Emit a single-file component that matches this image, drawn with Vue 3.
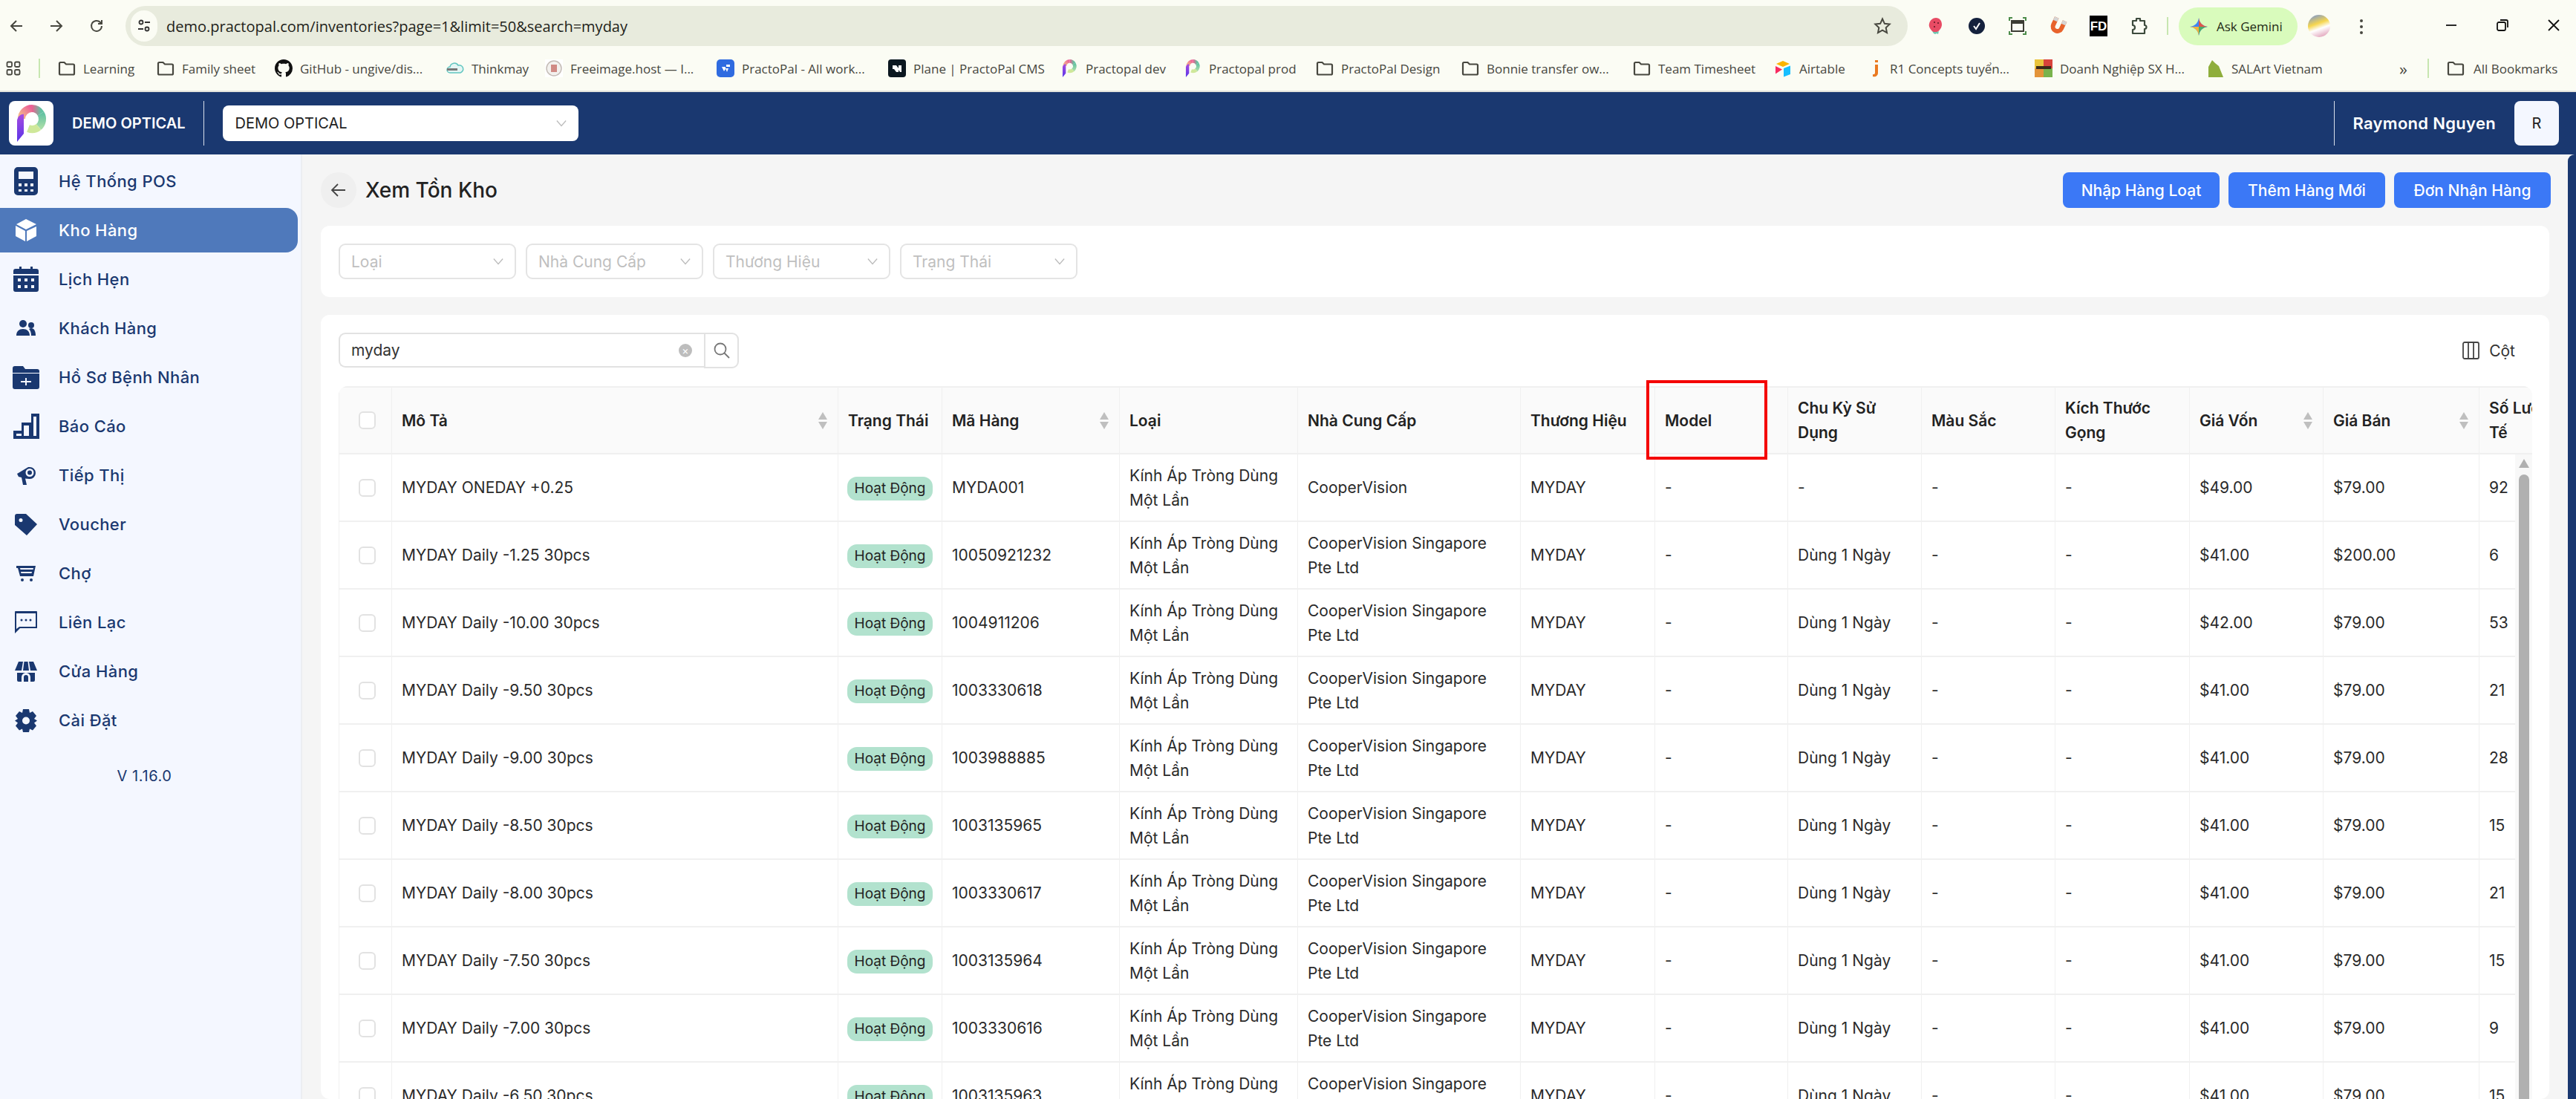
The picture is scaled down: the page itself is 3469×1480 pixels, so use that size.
<script setup>
const logo = `<defs><linearGradient id="ps" x1="0" y1="0" x2="0" y2="1"><stop offset="0" stop-color="#a64be0"/><stop offset="1" stop-color="#5a35e8"/></linearGradient><linearGradient id="pa" x1="0" y1="1" x2="1" y2="0"><stop offset="0" stop-color="#f3c08a"/><stop offset="1" stop-color="#ec5f97"/></linearGradient><linearGradient id="pb" x1="0" y1="0" x2="1" y2="0"><stop offset="0" stop-color="#ec5f8f"/><stop offset="1" stop-color="#62c2a2"/></linearGradient><linearGradient id="pc" x1="0" y1="0" x2="0" y2="1"><stop offset="0" stop-color="#62c2a2"/><stop offset="1" stop-color="#a5dca8"/></linearGradient></defs><path d="M8 19A14 14 0 0 1 22 5" fill="none" stroke="url(#pa)" stroke-width="10"/><path d="M22 5A14 14 0 0 1 34 12" fill="none" stroke="url(#pb)" stroke-width="10"/><path d="M34 12A14 14 0 0 1 31 30" fill="none" stroke="url(#pc)" stroke-width="10"/><path d="M31 30A14 14 0 0 1 17 32" fill="none" stroke="#cfe89a" stroke-width="10"/><path d="M2 21C3 16 7 12 11 13V39L2 50z" fill="url(#ps)"/>`
const small = `<g transform="translate(2 0) scale(.48)">${logo}</g>`
const folder = `<path d="M2 5.500A1.500 1.500 0 0 1 3.500 4h5l2.500 2.500h9.500A1.500 1.500 0 0 1 22 8v11a1.500 1.500 0 0 1-1.500 1.500h-17A1.500 1.500 0 0 1 2 19z" fill="none" stroke="#47473f" stroke-width="2.200"/>`
const bookmarks = [
  { t: 'Learning', w: 133, i: folder },
  { t: 'Family sheet', w: 159, i: folder },
  { t: 'GitHub - ungive/dis...', w: 231, i: `<path transform="scale(1.5)" d="M8 0C3.580 0 0 3.580 0 8c0 3.540 2.290 6.530 5.470 7.590.4.070.550-.170.550-.380 0-.190-.010-.820-.010-1.490-2.010.370-2.530-.490-2.690-.940-.090-.230-.480-.940-.820-1.130-.280-.150-.680-.520-.010-.530.630-.010 1.080.580 1.230.820.720 1.210 1.870.870 2.330.660.070-.520.280-.870.510-1.070-1.780-.200-3.640-.890-3.640-3.950 0-.870.310-1.590.820-2.150-.080-.200-.360-1.020.080-2.120 0 0 .670-.210 2.200.820.640-.180 1.320-.270 2-.270.680 0 1.360.090 2 .270 1.530-1.040 2.200-.820 2.200-.820.440 1.100.160 1.920.080 2.120.510.560.820 1.270.820 2.150 0 3.070-1.870 3.750-3.650 3.950.290.250.540.730.540 1.480 0 1.070-.010 1.930-.010 2.200 0 .210.150.460.550.380A8.013 8.013 0 0 0 16 8c0-4.420-3.580-8-8-8z" fill="#111"/>` },
  { t: 'Thinkmay', w: 133, i: `<path d="M5 18a4 4 0 0 1 0-8 6 6 0 0 1 11-2 5 5 0 0 1 3 10z" fill="#e4f6f4" stroke="#62c6c0" stroke-width="1.500"/><rect x="1" y="12" width="14" height="3" fill="#777"/>` },
  { t: 'Freeimage.host — I...', w: 231, i: `<rect width="24" height="24" fill="#fff"/><circle cx="12" cy="12" r="10" fill="#f3f1ee" stroke="#c4bcb6" stroke-width="1.500"/><rect x="8" y="7" width="8" height="10" fill="#d08a84"/>` },
  { t: 'PractoPal - All work...', w: 231, i: `<rect width="24" height="24" rx="5" fill="#2f6be0"/><path d="M7 10h5v3l-2 3zM13 7h5v3h-5zM12 12h4l-2 5z" fill="#fff"/>` },
  { t: 'Plane | PractoPal CMS', w: 232, i: `<rect width="24" height="24" rx="4" fill="#0b1720"/><path d="M6 8h5l3 4v5h-3l-3-4H6zM14 8h4v9h-2l-2-3z" fill="#fff"/>` },
  { t: 'Practopal dev', w: 166, i: small },
  { t: 'Practopal prod', w: 178, i: small },
  { t: 'PractoPal Design', w: 196, i: folder },
  { t: 'Bonnie transfer ow...', w: 231, i: folder },
  { t: 'Team Timesheet', w: 190, i: folder },
  { t: 'Airtable', w: 122, i: `<path d="M12 2l9 4-9 4-9-4z" fill="#fcb400"/><path d="M13 12l9-3.500V20l-9 3.500z" fill="#18bfff"/><path d="M2 9l9 4.500-9 6z" fill="#f82b60"/>` },
  { t: 'R1 Concepts tuyển...', w: 229, i: `<path d="M14 1h4v3h-4zM14 7h4v11c0 4-3 6-7 5v-3c2 .5 3-.5 3-2z" fill="#ea7a21"/>` },
  { t: 'Doanh Nghiệp SX H...', w: 231, i: `<rect width="12" height="12" fill="#eac43c"/><rect x="12" width="12" height="12" fill="#d8433b"/><rect y="12" width="12" height="12" fill="#e3943a"/><rect x="12" y="12" width="12" height="12" fill="#79b34c"/><rect x="2" y="9" width="20" height="4" fill="#3a2a1a"/>` },
  { t: 'SALArt Vietnam', w: 0, i: `<path d="M3 24V10L8 1l4 4 5 4 6 15z" fill="#8fae3c"/>` },
]
const exts = [
  `<path d="M11 1c5 0 8 4 8 9 0 4-3 8-6 10-2 1-5 1-7-1-3-3-5-7-4-10 1-5 5-8 9-8z" fill="#e84b64"/><circle cx="9" cy="7" r="1" fill="#5a1520"/><circle cx="14" cy="8" r="1" fill="#5a1520"/><circle cx="9" cy="13" r="1" fill="#5a1520"/><path d="M6 19c3 2 7 1 9 0l-1 4-2-1-2 1-2-1z" fill="#6cc7b0"/>`,
  `<circle cx="12" cy="12" r="11" fill="#14213d"/><path d="M8 12l3 4 5-8" fill="none" stroke="#fff" stroke-width="2"/>`,
  `<path d="M1 5V1h4M19 1h4v4M23 19v4h-4M5 23H1v-4" fill="none" stroke="#4c8c4a" stroke-width="2"/><rect x="4" y="5" width="16" height="14" fill="none" stroke="#3c3c34" stroke-width="2"/><rect x="4" y="5" width="16" height="4" fill="#3c3c34"/>`,
  `<g transform="rotate(25 12 12)"><path d="M3 2v11a9 9 0 0 0 18 0V2h-6v11a3 3 0 0 1-6 0V2z" fill="#e8632c"/><rect x="3" y="2" width="6" height="5" fill="#d5d5d5"/><rect x="15" y="2" width="6" height="5" fill="#d5d5d5"/></g>`,
  `<rect width="24" height="28" y="-2" fill="#000"/><text x="12" y="18" text-anchor="middle" font-family="Liberation Sans, sans-serif" font-weight="700" font-size="17" fill="#fff">FD</text>`,
  `<path d="M9 5V2h5v3h6v6a2.500 2.500 0 0 1 0 5v6H4v-5a3 3 0 0 0 0-6V5z" fill="none" stroke="#3c4a3c" stroke-width="2.200" stroke-linejoin="round"/>`,
]
const nav = [
  { t: 'Hệ Thống POS', w: 32, h: 38, v: '0 0 32 38', i: `<path fill-rule="evenodd" d="M5 0h22a5 5 0 0 1 5 5v28a5 5 0 0 1-5 5H5a5 5 0 0 1-5-5V5a5 5 0 0 1 5-5zm1 6v10h20V6zM6 22v4h4v-4zm8 0v4h4v-4zm8 0v4h4v-4zM6 30v3h4v-3zm8 0v3h4v-3zm8 0v3h4v-3z"/>` },
  { t: 'Kho Hàng', w: 28, h: 30, v: '0 0 28 30', active: true, i: `<path d="M14 0l14 7-14 7L1 7zM0 9l13 7v14L0 23zM28 10v13l-13 7V16z"/>` },
  { t: 'Lịch Hẹn', w: 34, h: 34, v: '0 0 34 34', i: `<path fill-rule="evenodd" d="M8 0h3v3h12V0h3v3h5a3 3 0 0 1 3 3v4H0V6a3 3 0 0 1 3-3h5zM0 12h34v19a3 3 0 0 1-3 3H3a3 3 0 0 1-3-3zm6 4v4h4v-4zm9 0v4h4v-4zm9 0v4h4v-4zM6 25v4h4v-4zm9 0v4h4v-4zm9 0v4h4v-4z"/>` },
  { t: 'Khách Hàng', w: 26, h: 22, v: '0 0 26 22', i: `<circle cx="9" cy="5" r="5"/><circle cx="20" cy="7" r="4"/><path d="M0 21c0-6 4-9 9-9s9 3 9 9zM20 21c0-4-1-7-3-9 1-.5 2-1 3-1 4 0 6 4 6 10z"/>` },
  { t: 'Hồ Sơ Bệnh Nhân', w: 36, h: 31, v: '0 0 36 31', i: `<path fill-rule="evenodd" d="M3 0h11l3 4h16a3 3 0 0 1 3 3v2H0V3a3 3 0 0 1 3-3zM0 10h36v18a3 3 0 0 1-3 3H3a3 3 0 0 1-3-3zm17 6v4h-6v2h6v4h2v-4h6v-2h-6v-4z"/>` },
  { t: 'Báo Cáo', w: 35, h: 34, v: '0 0 35 34', i: `<path fill-rule="evenodd" d="M24 0h11v34H0V23h11V12h13zm3 4v26h4V4zM14 16v14h7V16zM4 27v3h7v-3z"/>` },
  { t: 'Tiếp Thị', w: 25, h: 25, v: '0 0 25 25', i: `<path fill-rule="evenodd" d="M0 10l15-9h2a8 8 0 0 1 0 16l-6-.5 2 8.500H8l-2-10-4-1zM17 3a5.500 5.500 0 1 0 0 11 5.500 5.500 0 0 0 0-11zm0 2.500a3 3 0 1 1 0 6 3 3 0 0 1 0-6z"/>` },
  { t: 'Voucher', w: 30, h: 29, v: '0 0 30 29', i: `<path fill-rule="evenodd" d="M3 0h12l15 14-14 15L0 15V3a3 3 0 0 1 3-3zm5 6a2.500 2.500 0 1 0 0 5 2.500 2.500 0 0 0 0-5z"/>` },
  { t: 'Chợ', w: 26, h: 21, v: '0 0 26 21', i: `<path fill-rule="evenodd" d="M0 0h26l-3 14H5L2 3H0zm5 3l.5 2h17l.5-2zm1 5l.5 2h14l.5-2z"/><circle cx="8" cy="19" r="2"/><circle cx="20" cy="19" r="2"/>` },
  { t: 'Liên Lạc', w: 30, h: 30, v: '0 0 30 30', i: `<path fill-rule="evenodd" d="M1 0h28a1 1 0 0 1 1 1v22H7l-7 7V1a1 1 0 0 1 1-1zm1 3v21l4-3h22V3z"/><circle cx="9" cy="12" r="1.500"/><circle cx="15" cy="12" r="1.500"/><circle cx="21" cy="12" r="1.500"/>` },
  { t: 'Cửa Hàng', w: 30, h: 27, v: '0 0 30 27', i: `<path fill-rule="evenodd" d="M5 0h6l-2 12H0zM12.500 0h5L19 12h-8zM19 0h6l5 12h-9zM3 15h24v10a2 2 0 0 1-2 2h-4v-6a6 6 0 0 0-12 0v6H5a2 2 0 0 1-2-2zM12 21a3 3 0 0 1 6 0v6h-6z"/>` },
  { t: 'Cài Đặt', w: 30, h: 31, v: '0 0 30 31', i: `<path fill-rule="evenodd" d="M11 0h8l1 5 4-2 5 6-3 4 4 2.500-4 3 3 4-5 6-4-2-1 4.500h-8l-1-4.500-4 2-5-6 3-4-4-3 4-2.500-3-4 5-6 4 2zM15 10.500a5 5 0 1 0 0 10 5 5 0 0 0 0-10z"/>` },
]
const filters = ['Loại', 'Nhà Cung Cấp', 'Thương Hiệu', 'Trạng Thái']
const columns = [
  { t: 'Mô Tả', w: 601, sort: true },
  { t: 'Trạng Thái', w: 140 },
  { t: 'Mã Hàng', w: 239, sort: true },
  { t: 'Loại', w: 240 },
  { t: 'Nhà Cung Cấp', w: 300 },
  { t: 'Thương Hiệu', w: 181 },
  { t: 'Model', w: 179 },
  { t: 'Chu Kỳ Sử Dụng', w: 180 },
  { t: 'Màu Sắc', w: 180 },
  { t: 'Kích Thước Gọng', w: 181 },
  { t: 'Giá Vốn', w: 180, sort: true },
  { t: 'Giá Bán', w: 210, sort: true },
  { t: 'Số Lượng Thực Tế', w: 190 },
]
const rows = [
  ['MYDAY ONEDAY +0.25', 'MYDA001', 'CooperVision', '-', '$49.00', '$79.00', '92'],
  ['MYDAY Daily -1.25 30pcs', '10050921232', 'CooperVision Singapore Pte Ltd', 'Dùng 1 Ngày', '$41.00', '$200.00', '6'],
  ['MYDAY Daily -10.00 30pcs', '1004911206', 'CooperVision Singapore Pte Ltd', 'Dùng 1 Ngày', '$42.00', '$79.00', '53'],
  ['MYDAY Daily -9.50 30pcs', '1003330618', 'CooperVision Singapore Pte Ltd', 'Dùng 1 Ngày', '$41.00', '$79.00', '21'],
  ['MYDAY Daily -9.00 30pcs', '1003988885', 'CooperVision Singapore Pte Ltd', 'Dùng 1 Ngày', '$41.00', '$79.00', '28'],
  ['MYDAY Daily -8.50 30pcs', '1003135965', 'CooperVision Singapore Pte Ltd', 'Dùng 1 Ngày', '$41.00', '$79.00', '15'],
  ['MYDAY Daily -8.00 30pcs', '1003330617', 'CooperVision Singapore Pte Ltd', 'Dùng 1 Ngày', '$41.00', '$79.00', '21'],
  ['MYDAY Daily -7.50 30pcs', '1003135964', 'CooperVision Singapore Pte Ltd', 'Dùng 1 Ngày', '$41.00', '$79.00', '15'],
  ['MYDAY Daily -7.00 30pcs', '1003330616', 'CooperVision Singapore Pte Ltd', 'Dùng 1 Ngày', '$41.00', '$79.00', '9'],
  ['MYDAY Daily -6.50 30pcs', '1003135963', 'CooperVision Singapore Pte Ltd', 'Dùng 1 Ngày', '$41.00', '$79.00', '15'],
]
</script>

<template>
  <div class="app">
    <div class="chrome">
      <div class="toolbar">
        <div class="nav-btns">
          <svg viewBox="0 0 20 20" class="tb-ic"><path d="M18 10H3M10 3l-7 7 7 7" /></svg>
          <svg viewBox="0 0 20 20" class="tb-ic"><path d="M2 10h15M10 3l7 7-7 7" /></svg>
          <svg viewBox="0 0 20 20" class="tb-ic"><path d="M17 10a7 7 0 1 1-2-5l2 2M17 2v5h-5" /></svg>
        </div>
        <div class="omnibox">
          <span class="site-ic">
            <svg viewBox="0 0 20 20" width="20" height="20"><circle cx="6" cy="5" r="2.500" fill="none" stroke="#333" stroke-width="1.800"/><path d="M11 5h7M2 14h7" stroke="#333" stroke-width="1.800"/><circle cx="14" cy="14" r="2.500" fill="none" stroke="#333" stroke-width="1.800"/></svg>
          </span>
          <span class="url">demo.practopal.com/inventories?page=1&amp;limit=50&amp;search=myday</span>
          <svg class="star" viewBox="0 0 24 24"><path d="M12 2.500l2.900 6.300 6.800.8-5 4.700 1.300 6.800-6-3.400-6 3.400 1.300-6.800-5-4.700 6.800-.8z" /></svg>
        </div>
        <div class="exts">
          <svg v-for="(e, i) in exts" :key="i" viewBox="0 0 24 24" class="ext" v-html="e"></svg>
        </div>
        <span class="tb-sep"></span>
        <div class="gemini">
          <svg viewBox="0 0 24 24" width="24" height="24"><path d="M12 0c1 7 5 11 12 12-7 1-11 5-12 12-1-7-5-11-12-12 7-1 11-5 12-12z" fill="#3f86f5"/><path d="M12 0c1 7 5 11 12 12H12z" fill="#e0564a"/><path d="M12 24c1-7 5-11 12-12H12z" fill="#4cab6a"/><path d="M12 24c-1-7-5-11-12-12h12z" fill="#f4b23c"/></svg>
          <span>Ask Gemini</span>
        </div>
        <span class="avatar"></span>
        <svg class="dots" viewBox="0 0 6 24"><circle cx="3" cy="4" r="2"/><circle cx="3" cy="12" r="2"/><circle cx="3" cy="20" r="2"/></svg>
        <div class="win">
          <svg viewBox="0 0 20 20"><path d="M3 10h14" /></svg>
          <svg viewBox="0 0 20 20"><rect x="3" y="6" width="11" height="11" rx="2"/><path d="M7 3h8a2 2 0 0 1 2 2v8"/></svg>
          <svg viewBox="0 0 20 20"><path d="M3 3l14 14M17 3L3 17" /></svg>
        </div>
      </div>
      <div class="bookmarks">
        <svg class="apps" viewBox="0 0 20 20"><rect x="1.500" y="1.500" width="6.500" height="6.500" rx="1.500"/><rect x="12" y="1.500" width="6.500" height="6.500" rx="1.500"/><rect x="1.500" y="12" width="6.500" height="6.500" rx="1.500"/><rect x="12" y="12" width="6.500" height="6.500" rx="1.500"/></svg>
        <span class="bm-sep"></span>
        <div class="bm-list">
          <div v-for="b in bookmarks" :key="b.t" class="bm" :style="b.w ? { width: b.w + 'px' } : {}">
            <svg viewBox="0 0 24 24" class="bm-ic" v-html="b.i"></svg>
            <span>{{ b.t }}</span>
          </div>
        </div>
        <span class="bm-more">»</span>
        <span class="bm-sep"></span>
        <div class="bm all">
          <svg viewBox="0 0 24 24" class="bm-ic" v-html="bookmarks[0].i"></svg>
          <span>All Bookmarks</span>
        </div>
      </div>
    </div>

    <header class="topbar">
      <div class="tile"><svg viewBox="0 0 42 50" width="42" height="50" v-html="logo"></svg></div>
      <span class="brand">DEMO OPTICAL</span>
      <span class="vline"></span>
      <div class="org-select">
        <span>DEMO OPTICAL</span>
        <svg class="chev" viewBox="0 0 16 10"><path d="M1 1l7 8 7-8" /></svg>
      </div>
      <span class="grow"></span>
      <span class="vline"></span>
      <span class="user">Raymond Nguyen</span>
      <div class="tile r">R</div>
    </header>

    <div class="body">
      <aside class="sidebar">
        <nav class="menu">
          <a v-for="n in nav" :key="n.t" class="item" :class="{ active: n.active }">
            <span class="item-ic">
              <svg :viewBox="n.v" :style="{ width: n.w + 'px', height: n.h + 'px' }" fill="currentColor" v-html="n.i"></svg>
            </span>
            <span>{{ n.t }}</span>
          </a>
        </nav>
        <div class="version">V 1.16.0</div>
      </aside>

      <main class="main">
        <div class="page-head">
          <span class="back"><svg viewBox="0 0 24 24" width="24" height="24"><path d="M21 12H4M11 4l-8 8 8 8" fill="none" stroke="#444" stroke-width="1.800"/></svg></span>
          <h1>Xem Tồn Kho</h1>
          <span class="grow"></span>
          <button class="btn">Nhập Hàng Loạt</button>
          <button class="btn">Thêm Hàng Mới</button>
          <button class="btn">Đơn Nhận Hàng</button>
        </div>

        <section class="card filters">
          <div v-for="f in filters" :key="f" class="select">
            <span>{{ f }}</span>
            <svg class="chev" viewBox="0 0 16 10"><path d="M1 1l7 8 7-8" /></svg>
          </div>
        </section>

        <section class="card list">
          <div class="list-top">
            <div class="search">
              <div class="search-input">
                <span>myday</span>
                <span class="clear">×</span>
              </div>
              <div class="search-btn">
                <svg viewBox="0 0 24 24" width="24" height="24"><circle cx="10" cy="10" r="7.500" fill="none" stroke="#777" stroke-width="1.800"/><path d="M15.500 15.500L22 22" stroke="#777" stroke-width="1.800"/></svg>
              </div>
            </div>
            <div class="col-btn">
              <svg viewBox="0 0 23 24" width="23" height="24"><rect x="1" y="1" width="21" height="22" rx="2"/><path d="M8 1v22M15 1v22"/></svg>
              <span>Cột</span>
            </div>
          </div>

          <div class="table-wrap">
            <div class="table-clip">
              <table>
                <thead>
                  <tr>
                    <th class="chk"><span class="box"></span></th>
                    <th v-for="c in columns" :key="c.t" :style="{ width: c.w + 'px' }">
                      <div class="th-in">
                        <span>{{ c.t }}</span>
                        <span v-if="c.sort" class="sort"><i class="up"></i><i class="down"></i></span>
                      </div>
                    </th>
                  </tr>
                </thead>
                <tbody>
                  <tr v-for="r in rows" :key="r[1]">
                    <td class="chk"><span class="box"></span></td>
                    <td>{{ r[0] }}</td>
                    <td><span class="badge">Hoạt Động</span></td>
                    <td>{{ r[1] }}</td>
                    <td>Kính Áp Tròng Dùng Một Lần</td>
                    <td>{{ r[2] }}</td>
                    <td>MYDAY</td>
                    <td>-</td>
                    <td>{{ r[3] }}</td>
                    <td>-</td>
                    <td>-</td>
                    <td>{{ r[4] }}</td>
                    <td>{{ r[5] }}</td>
                    <td>{{ r[6] }}</td>
                  </tr>
                </tbody>
              </table>
            </div>
            <div class="scrollbar"><i class="arrow"></i><i class="thumb"></i></div>
            <div class="highlight"></div>
          </div>
        </section>
      </main>
      <div class="edge"></div>
    </div>
  </div>
</template>

<style scoped>
.app { width: 3469px; height: 1480px; display: flex; flex-direction: column; overflow: hidden; font-family: Inter, "Liberation Sans", sans-serif; color: #222; background: #f5f5f5; }
.grow { flex: 1; }
.chrome { height: 124px; flex: none; background: #fbfcf4; border-bottom: 2px solid #e3e3dc; box-sizing: border-box; font-family: "Open Sans", "Noto Sans", sans-serif; }
.toolbar { height: 62px; padding-top: 8px; box-sizing: border-box; display: flex; align-items: flex-start; }
.nav-btns { width: 169px; height: 54px; flex: none; display: flex; align-items: center; gap: 34px; padding-left: 12px; box-sizing: border-box; }
.tb-ic { width: 20px; height: 20px; fill: none; stroke: #47473f; stroke-width: 2; flex: none; }
.omnibox { width: 2400px; height: 54px; flex: none; background: #e8ebdd; border-radius: 27px; display: flex; align-items: center; padding: 0 22px 0 7px; box-sizing: border-box; }
.site-ic { width: 36px; height: 42px; border-radius: 21px; background: #fbfcf4; display: flex; align-items: center; justify-content: center; flex: none; }
.url { margin-left: 12px; font-size: 20px; color: #1f1f1a; white-space: nowrap; flex: 1; }
.star { width: 24px; height: 24px; fill: none; stroke: #47473f; stroke-width: 2; }
.exts { display: flex; gap: 30.400px; margin-left: 27px; height: 54px; align-items: center; flex: none; }
.ext { width: 24px; height: 24px; overflow: visible; }
.tb-sep { width: 2px; height: 24px; background: #c7e6b0; margin: 15px 14px 0 26px; flex: none; }
.gemini { width: 160px; height: 51px; margin-top: 2px; flex: none; background: #d9fbbc; border-radius: 26px; display: flex; align-items: center; gap: 12px; padding-left: 15px; box-sizing: border-box; font-size: 17px; color: #1f2a15; }
.avatar { width: 30px; height: 30px; margin: 12px 0 0 14px; flex: none; border-radius: 50%; background: linear-gradient(160deg, #6d8fe0 0, #f6d64e 40%, #fff 60%, #d98aa8 100%); }
.dots { width: 6px; height: 24px; margin: 16px 0 0 39px; fill: #47473f; flex: none; }
.win { display: flex; gap: 49px; margin: 16px 0 0 108px; flex: none; }
.win svg { width: 20px; height: 20px; fill: none; stroke: #111; stroke-width: 1.800; }
.bookmarks { height: 60px; display: flex; align-items: center; padding-left: 8px; font-size: 17px; color: #47473f; }
.apps { width: 20px; height: 20px; fill: none; stroke: #47473f; stroke-width: 1.800; flex: none; }
.bm-sep { width: 2px; height: 26px; background: #c7e6b0; flex: none; margin: 0 24px; }
.bm-list { display: flex; flex: none; width: 3050px; }
.bm { display: flex; align-items: center; gap: 10px; flex: none; white-space: nowrap; }
.bm-ic { width: 24px; height: 24px; flex: none; }
.bm-more { margin-left: 103px; width: 14px; font-size: 22px; flex: none; }
.all { gap: 12px; }
.topbar { height: 84px; flex: none; background: #1a3870; display: flex; align-items: center; padding: 0 23px 0 12px; box-sizing: border-box; color: #fff; }
.tile { width: 60px; height: 60px; background: #fff; border-radius: 8px; display: flex; align-items: center; justify-content: center; flex: none; }
.tile.r { background: #f4f7ff; color: #222; font-size: 20px; margin-left: 25px; }
.brand { margin: 0 24px 0 25px; font-size: 20px; font-weight: 600; white-space: nowrap; }
.vline { width: 1px; height: 60px; background: #d8deea; flex: none; }
.org-select { width: 479px; height: 48px; margin-left: 25px; background: #fff; border-radius: 8px; display: flex; align-items: center; justify-content: space-between; padding: 0 16px 0 17px; box-sizing: border-box; color: #222; font-size: 20px; }
.chev { width: 14px; height: 10px; fill: none; stroke: #bbb; stroke-width: 1.500; flex: none; }
.user { margin-left: 24px; font-size: 22px; font-weight: 600; letter-spacing: .3px; white-space: nowrap; }
.body { flex: 1; display: flex; min-height: 0; }
.sidebar { width: 407px; flex: none; background: #f4f7ff; border-right: 2px solid #eceef2; box-sizing: border-box; padding-top: 6px; color: #1a3870; }
.menu { display: flex; flex-direction: column; gap: 6px; }
.item { height: 60px; width: 401px; border-radius: 0 16px 16px 0; display: flex; align-items: center; font-size: 22px; font-weight: 500; letter-spacing: .4px; color: #1a3870; }
.item.active { background: #4f79bb; color: #fff; }
.item-ic { width: 79px; padding-right: 9px; box-sizing: border-box; display: flex; justify-content: center; flex: none; }
.version { text-align: center; margin-top: 33px; padding-right: 16px; font-size: 20px; letter-spacing: .6px; color: #1a3870; }
.main { flex: 1; min-width: 0; padding: 24px 25px 0 25px; box-sizing: border-box; display: flex; flex-direction: column; }
.page-head { height: 48px; display: flex; align-items: center; flex: none; margin-right: -2px; }
.back { width: 48px; height: 48px; border-radius: 50%; background: #efefef; display: flex; align-items: center; justify-content: center; flex: none; }
h1 { margin: 0 0 0 12px; font-size: 28px; font-weight: 500; color: #222; }
.btn { width: 211px; height: 48px; margin-left: 12px; border: 0; border-radius: 8px; background: #3b78f6; color: #fff; font: 500 21px Inter, "Liberation Sans", sans-serif; }
.card { background: #fff; border-radius: 12px; }
.filters { height: 96px; margin-top: 24px; display: flex; align-items: center; gap: 13px; padding-left: 24px; flex: none; }
.select { width: 239px; height: 48px; border: 2px solid #e4e4e4; border-radius: 9px; box-sizing: border-box; display: flex; align-items: center; justify-content: space-between; padding: 0 15px; color: #bfbfbf; font-size: 21px; }
.list { margin-top: 24px; flex: 1; min-height: 0; padding: 24px 23px 0 24px; }
.list-top { height: 48px; display: flex; justify-content: space-between; align-items: center; }
.search { display: flex; }
.search-input { width: 492px; height: 47px; box-sizing: border-box; border: 2px solid #e2e2e2; border-right: 0; border-radius: 9px 0 0 9px; display: flex; align-items: center; justify-content: space-between; padding: 0 16px 0 15px; font-size: 21px; color: #333; }
.clear { width: 18px; height: 18px; border-radius: 50%; background: #bdbdbd; color: #fff; font-size: 14px; line-height: 18px; text-align: center; }
.search-btn { width: 47px; height: 48px; box-sizing: border-box; border: 2px solid #e2e2e2; border-radius: 0 9px 9px 0; display: flex; align-items: center; justify-content: center; }
.col-btn { display: flex; align-items: center; gap: 13px; padding-right: 23px; font-size: 21px; color: #333; }
.col-btn svg { fill: none; stroke: #444; stroke-width: 1.800; }
.table-wrap { position: relative; margin-top: 24px; height: 960px; }
.table-clip { height: 100%; overflow: hidden; border-radius: 12px 12px 0 0; }
table { table-layout: fixed; border-collapse: separate; border-spacing: 0; width: 3072px; font-size: 21px; line-height: 33px; }
th, td { box-sizing: border-box; border-right: 1px solid #f0f0f0; border-bottom: 2px solid #f0f0f0; padding: 0 13px; text-align: left; }
th { height: 92px; background: #fafafa; font-weight: 600; color: #222; border-top: 2px solid #f0f0f0; }
td { height: 91px; font-weight: 400; color: #2a2a2a; }
td:first-child, th:first-child { border-left: 1px solid #f0f0f0; }
.chk { width: 72px; padding: 0 0 0 26px; }
.box { display: block; width: 23px; height: 24px; border: 2px solid #e2e2e2; border-radius: 6px; box-sizing: border-box; background: #fff; }
.th-in { display: flex; align-items: center; justify-content: space-between; }
.sort { display: flex; flex-direction: column; gap: 3px; flex: none; margin-right: 1px; }
.sort i { display: block; width: 0; height: 0; border-left: 6px solid transparent; border-right: 6px solid transparent; }
.sort .up { border-bottom: 10px solid #bfbfbf; }
.sort .down { border-top: 10px solid #bfbfbf; }
.badge { display: inline-block; width: 115px; height: 32px; line-height: 32px; text-align: center; background: #b2e2ce; border-radius: 13px; font-size: 19px; margin-left: -1px; white-space: nowrap; color: #222; }
.scrollbar { position: absolute; top: 92px; right: 0; bottom: 0; width: 23px; background: #f8f8f8; }
.arrow { position: absolute; top: 6px; left: 5px; width: 0; height: 0; border-left: 7px solid transparent; border-right: 7px solid transparent; border-bottom: 12px solid #b0b0b0; }
.thumb { position: absolute; top: 27px; left: 5px; right: 4px; bottom: 0; background: #b0b0b0; border-radius: 7px 7px 0 0; }
.highlight { position: absolute; top: -8px; left: 1761px; width: 163px; height: 107px; border: 4px solid #f40000; box-sizing: border-box; }
.edge { width: 11px; flex: none; background: #1a3870; border-radius: 9px 0 0 0; }
</style>

<style>
html, body { margin: 0; overflow: hidden; }
</style>
